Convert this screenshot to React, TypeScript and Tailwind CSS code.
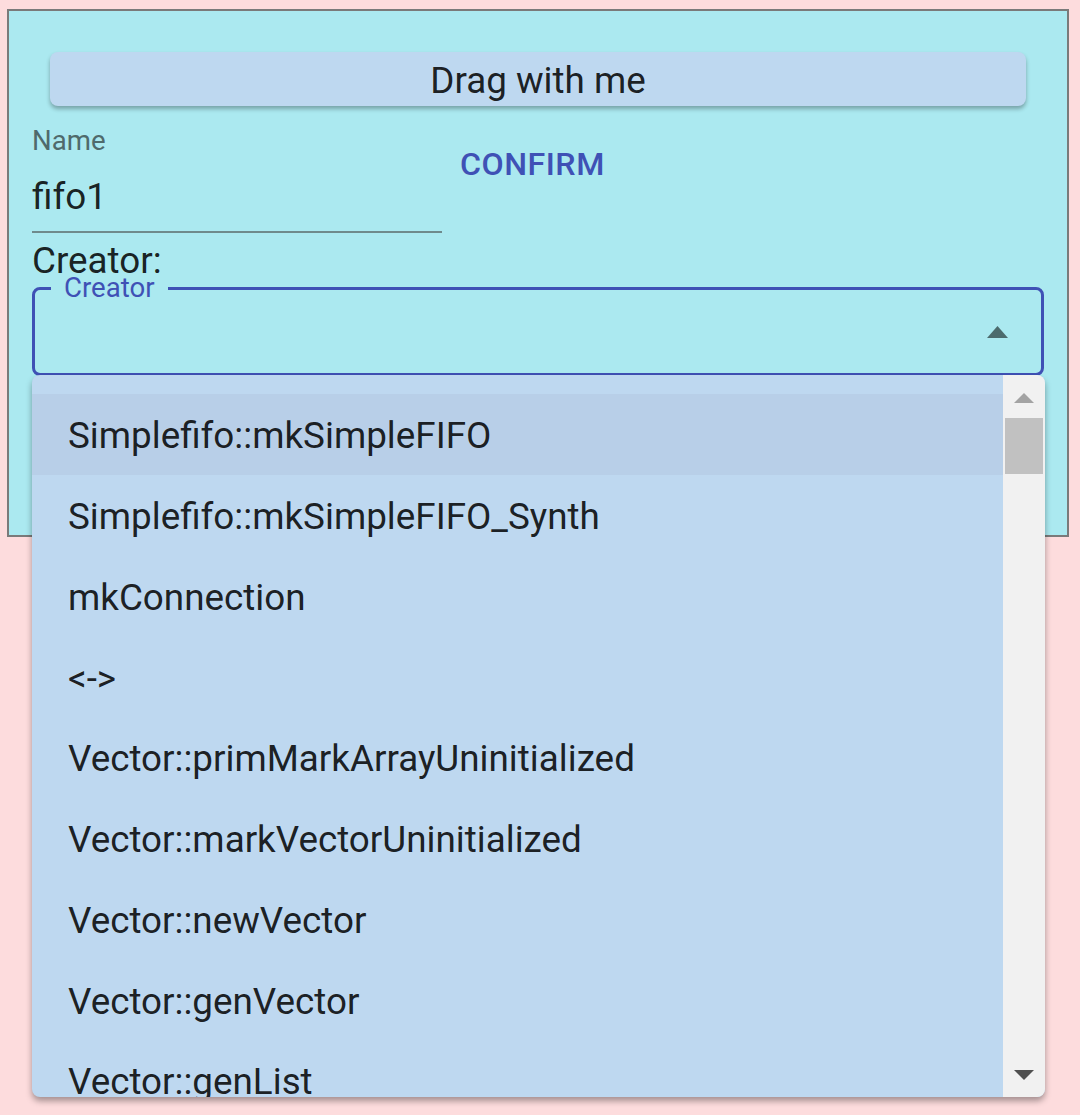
import React from "react";

const items = [
  "Simplefifo::mkSimpleFIFO",
  "Simplefifo::mkSimpleFIFO_Synth",
  "mkConnection",
  "<->",
  "Vector::primMarkArrayUninitialized",
  "Vector::markVectorUninitialized",
  "Vector::newVector",
  "Vector::genVector",
  "Vector::genList",
];

function Tri({ up, color }: { up?: boolean; color: string }) {
  return (
    <svg width="20" height="10" viewBox="0 0 20 10" className="block">
      <polygon points={up ? "10,0 20,10 0,10" : "0,0 20,0 10,10"} fill={color} />
    </svg>
  );
}

export default function App() {
  return (
    <div className="relative min-h-[1115px] w-[1080px] bg-[#fddcdd] pl-[7px] pt-[9px] font-['Roboto',sans-serif] text-[rgba(0,0,0,0.87)]">
      {/* card */}
      <div className="h-[528px] w-[1062px] border-2 border-[#7a7a7a] bg-[#abe9f0] px-[23px]">
        <div className="mx-[18px] mt-[41px] flex h-[54px] items-center justify-center rounded-[8px] bg-[#bed8f0] pt-[4px] text-[36.8px] shadow-[0_3px_4px_rgba(0,0,0,0.3)]">
          Drag with me
        </div>

        <div className="flex">
          <div className="w-[410px] border-b-2 border-[#6f8a8c] pb-[18px]">
            <div className="mt-[23px] h-[24px] text-[27.6px] leading-[24px] text-[#4f6a6c]">Name</div>
            <div className="mt-[28px] h-[32px] text-[36.8px] leading-[32px]">fifo1</div>
          </div>
          <div className="ml-[18px] mt-[38px] h-[40px] text-[32.2px] font-medium leading-[40px] tracking-[0.5px] text-[#3f51b5]">
            CONFIRM
          </div>
        </div>

        <div className="mt-[12px] h-[32px] text-[36.8px] leading-[32px]">Creator:</div>

        <div className="relative mt-[10px] flex h-[89px] items-center justify-end rounded-[8px] border-[3px] border-[#3f51b5] pr-[33px]">
          <span className="absolute left-[16px] top-[-13px] bg-[#abe9f0] px-[13px] text-[27.6px] leading-[22px] text-[#3f51b5]">
            Creator
          </span>
          <svg width="21" height="12" viewBox="0 0 21 12" className="block">
            <polygon points="10.5,0 21,12 0,12" fill="#4c6b6d" />
          </svg>
        </div>
      </div>

      {/* dropdown menu */}
      <div className="absolute left-[32px] top-[375px] flex h-[722px] w-[1013px] overflow-hidden rounded-[8px] bg-[#bed8f0] shadow-[0_4px_6px_rgba(0,0,0,0.35)]">
        <div className="flex-1 overflow-hidden pt-[19px]">
          {items.map((it, i) => (
            <div
              key={it}
              className={
                "flex h-[80.75px] items-center pl-[36px] pt-[3px] text-[36.8px] " +
                (i === 0 ? "bg-[#b8cfe8]" : "")
              }
            >
              {it}
            </div>
          ))}
        </div>
        <div className="flex w-[42px] flex-col items-center bg-[#f1f1f1]">
          <div className="mt-[18px]">
            <Tri up color="#a3a3a3" />
          </div>
          <div className="mt-[15px] h-[56px] w-[38px] bg-[#c1c1c1]" />
          <div className="mb-[17px] mt-auto">
            <Tri color="#505050" />
          </div>
        </div>
      </div>
    </div>
  );
}
